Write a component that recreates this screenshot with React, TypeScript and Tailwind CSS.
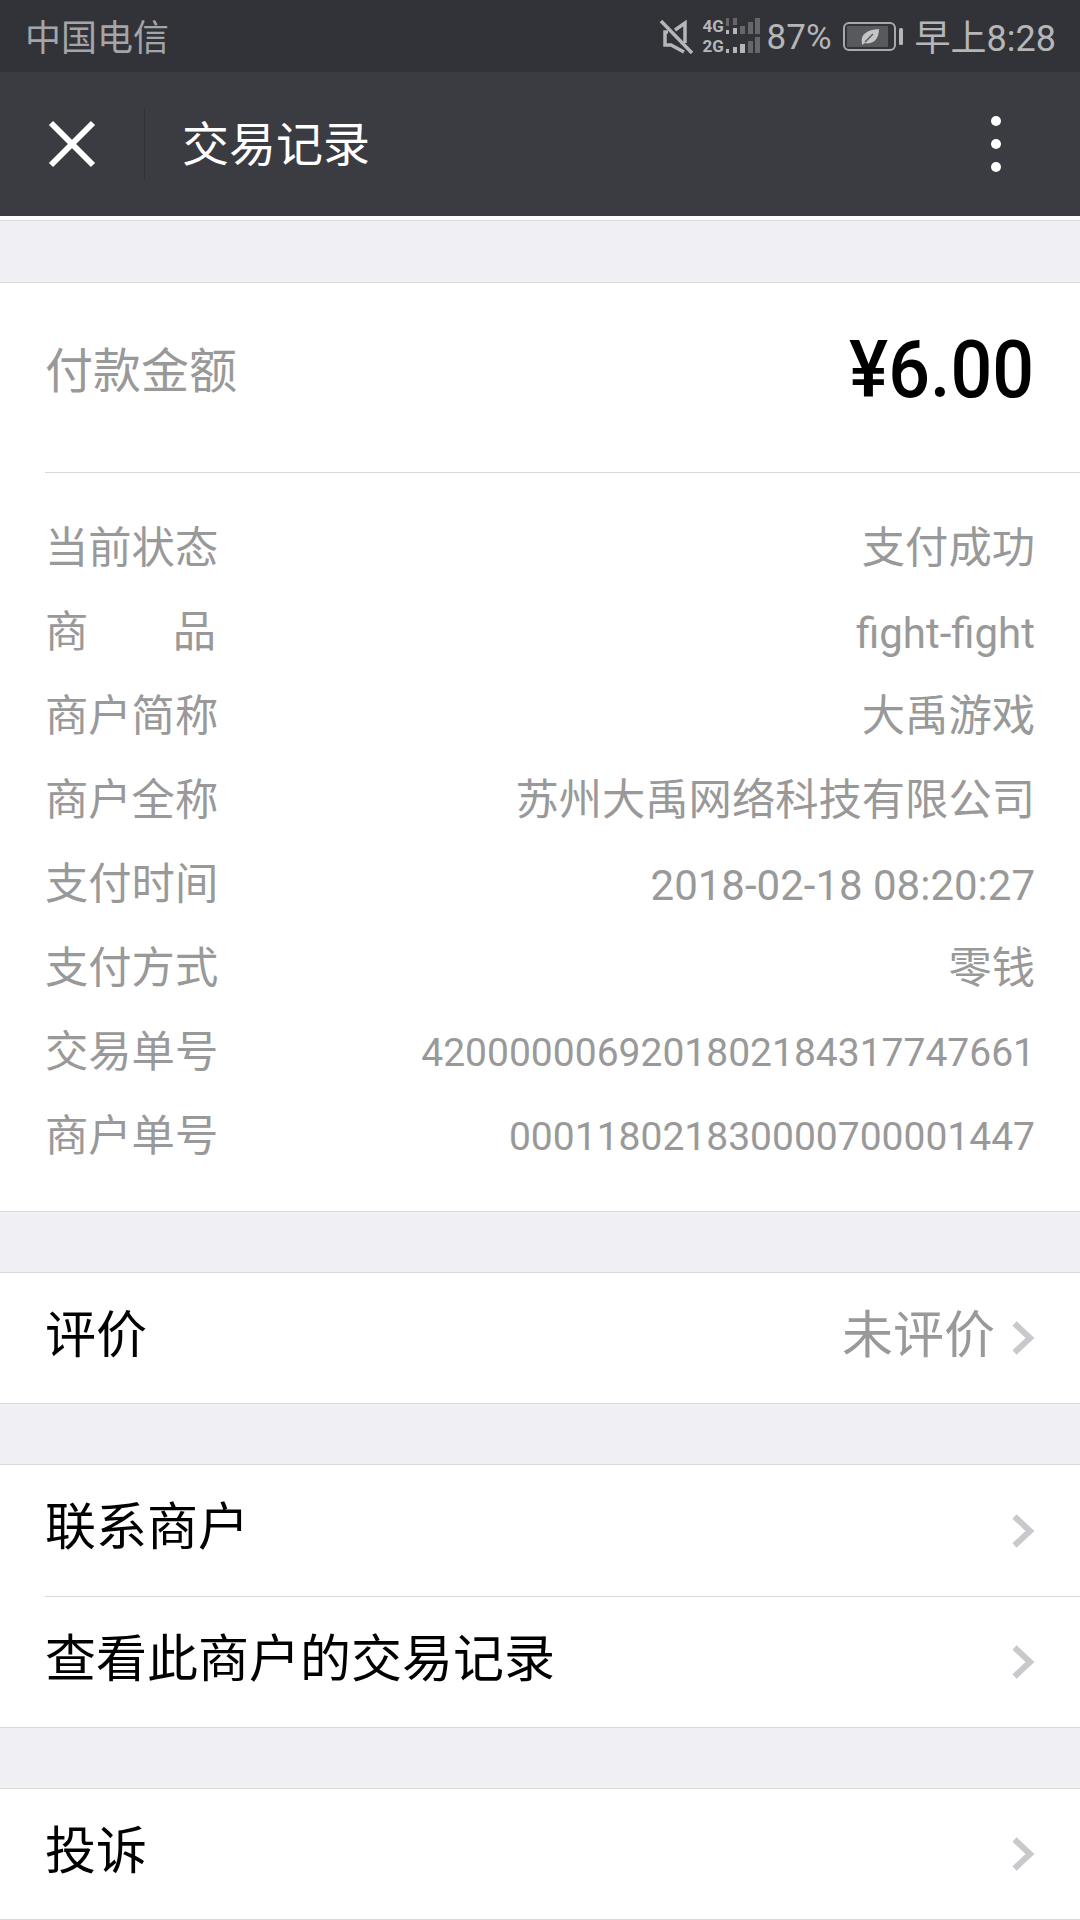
const cjk = "font-['Roboto','Noto_Sans_CJK_SC',sans-serif]";

const details = [
  { label: "当前状态", value: "支付成功", size: "text-[43.3px]" },
  { label: "商品", value: "fight-fight", size: "text-[42px]", spaced: true },
  { label: "商户简称", value: "大禹游戏", size: "text-[43.3px]" },
  { label: "商户全称", value: "苏州大禹网络科技有限公司", size: "text-[43.3px]" },
  { label: "支付时间", value: "2018-02-18 08:20:27", size: "text-[42px]" },
  { label: "支付方式", value: "零钱", size: "text-[43.3px]" },
  { label: "交易单号", value: "4200000069201802184317747661", size: "text-[39px]" },
  { label: "商户单号", value: "000118021830000700001447", size: "text-[39px]" },
];

function Chevron() {
  return (
    <svg width="24" height="36" viewBox="0 0 24 36" className="shrink-0">
      <path d="M3.5 3.5 L19 18 L3.5 32.5" fill="none" stroke="#c8c8cd" strokeWidth="6" />
    </svg>
  );
}

function Spacer() {
  return <div className="h-[62px] bg-[#efeff4] border-y border-[#d9d9d9]" />;
}

function LinkRow({ title, note, tall }: { title: string; note?: string; tall?: boolean }) {
  return (
    <div className={`${tall ? "h-[131px]" : "h-[130px]"} flex items-center pl-[45px] pr-[45px] justify-between`}>
      <span className="text-[51px] text-black -translate-y-[2px]">{title}</span>
      <div className="flex items-center gap-[16px]">
        {note && <span className="text-[51px] text-[#999999] -translate-y-[2px]">{note}</span>}
        <Chevron />
      </div>
    </div>
  );
}

function StatusIcons() {
  return (
    <div className="flex items-center">
      <svg width="34" height="34" viewBox="0 0 34 34" className="mr-[9px] -translate-y-[2px]">
        <path d="M1 1 L32 33" stroke="#b5b6b9" strokeWidth="3.5" />
        <path d="M25 23 V3 L15 10 M8 12 H5 V25 H11 L24 32" fill="none" stroke="#b5b6b9" strokeWidth="3.5" />
      </svg>
      <div className="w-[22px] flex flex-col text-[#b5b6b9] text-[17px] leading-[20px] font-bold -translate-y-[3px] font-['Roboto',sans-serif]">
        <span>4G</span>
        <span>2G</span>
      </div>
      <svg width="36" height="38" viewBox="0 0 36 38" className="mr-[6px] -translate-y-[3px]">
        <g fill="#66676b">
          <rect x="1" y="1" width="3" height="8" />
          <rect x="8" y="1" width="4" height="7" />
          <rect x="15" y="9" width="5" height="8" />
          <rect x="23" y="5" width="5" height="12" />
          <rect x="30" y="1" width="5" height="16" />
          <rect x="23" y="24" width="5" height="12" />
          <rect x="30" y="20" width="5" height="16" />
        </g>
        <g fill="#b5b6b9">
          <rect x="1" y="13" width="3" height="4" />
          <rect x="8" y="11" width="4" height="6" />
          <rect x="1" y="32" width="3" height="4" />
          <rect x="8" y="30" width="4" height="6" />
          <rect x="15" y="27" width="5" height="9" />
        </g>
      </svg>
      <span className="text-[35px] text-[#b5b6b9] mr-[11px]">87%</span>
      <svg width="60" height="30" viewBox="0 0 60 30" className="mr-[12px] -translate-y-[2px]">
        <rect x="1" y="1" width="51" height="27" rx="5" fill="none" stroke="#a8a9ac" strokeWidth="2" />
        <rect x="4" y="4" width="41" height="21" fill="#58595d" />
        <path d="M19 22 C17 12 24 8 36 7 C36 17 30 23 22 21 L19 23 Z" fill="#c4c5c7" />
        <path d="M22 20 L30 12" stroke="#58595d" strokeWidth="1.5" />
        <rect x="56" y="6" width="4" height="17" rx="1.5" fill="#b5b6b9" />
      </svg>
      <span className="text-[36px] text-[#b5b6b9]">早上8:28</span>
    </div>
  );
}

export default function App() {
  return (
    <div className={`w-[1080px] h-[1920px] overflow-hidden bg-white ${cjk}`}>
      <div className="h-[72px] bg-[#313338] flex items-center justify-between pl-[25px] pr-[24px] pt-[5px]">
        <span className="text-[36px] text-[#a4a5a8]">中国电信</span>
        <StatusIcons />
      </div>

      <div className="h-[144px] bg-[#3a3c42] flex items-center">
        <div className="w-[145px] h-[72px] flex items-center justify-center border-r border-[#303136]">
          <svg width="48" height="48" viewBox="0 0 48 48">
            <path d="M3 3 L45 45 M45 3 L3 45" stroke="#fff" strokeWidth="6" />
          </svg>
        </div>
        <span className="ml-[37px] text-[47px] text-white flex-1 translate-y-[1px]">交易记录</span>
        <div className="w-[10px] mr-[79px] flex flex-col gap-[13px]">
          <div className="w-[10px] h-[10px] rounded-full bg-white" />
          <div className="w-[10px] h-[10px] rounded-full bg-white" />
          <div className="w-[10px] h-[10px] rounded-full bg-white" />
        </div>
      </div>

      <div className="h-[4px] bg-white" />
      <div className="h-[63px] bg-[#efeff4] border-y border-[#d9d9d9]" />

      <div className="pl-[45px]">
        <div className="h-[190px] flex items-center justify-between pr-[46px] border-b border-[#d9d9d9]">
          <span className="text-[48px] text-[#999999] -translate-y-[6px]">付款金额</span>
          <span className="text-[80px] font-medium text-black origin-right scale-x-[0.92] -translate-y-[8px]">¥6.00</span>
        </div>
        <div className="pt-[34px] pr-[45px] h-[738px]">
          {details.map((row) => (
            <div key={row.label} className="h-[84px] flex items-center justify-between">
              <span className={`text-[43.3px] text-[#999999] w-[174px] whitespace-nowrap ${row.spaced ? "flex justify-between pr-[3px]" : ""}`}>
                {row.spaced ? (
                  <>
                    <span>商</span>
                    <span>品</span>
                  </>
                ) : (
                  row.label
                )}
              </span>
              <span className={`${row.size} text-[#999999]`}>{row.value}</span>
            </div>
          ))}
        </div>
      </div>

      <Spacer />
      <LinkRow title="评价" note="未评价" />
      <Spacer />
      <LinkRow title="联系商户" tall />
      <div className="ml-[45px] h-px bg-[#d9d9d9]" />
      <LinkRow title="查看此商户的交易记录" />
      <Spacer />
      <LinkRow title="投诉" />
      <div className="h-px bg-[#d9d9d9]" />
    </div>
  );
}
